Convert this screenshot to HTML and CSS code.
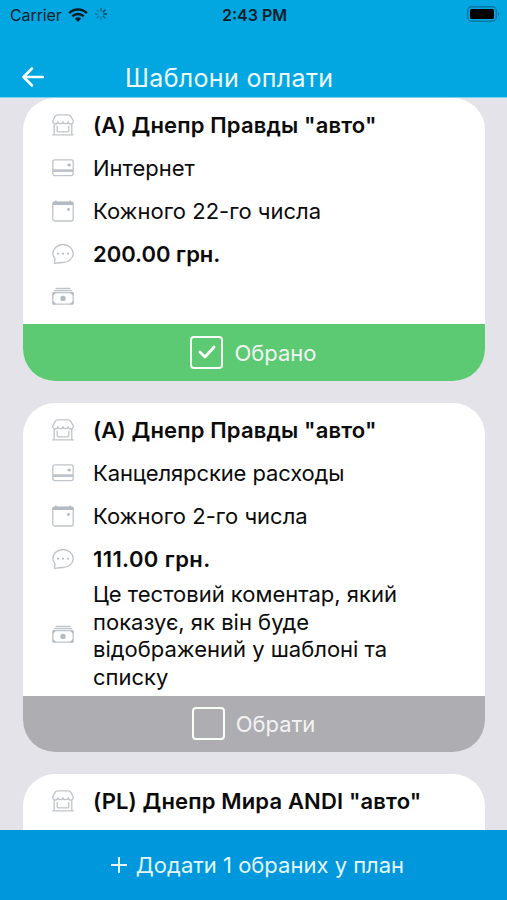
FILE: index.html
```
<!DOCTYPE html>
<html lang="uk">
<head>
<meta charset="utf-8">
<title>Шаблони оплати</title>
<link rel="stylesheet" href="styles.css">
</head>
<body>
<svg class="sprite" aria-hidden="true">
  <symbol id="store" viewBox="0 0 22 22"><path d="M5.500.8h11q1.500 0 2.200 1.300l2.500 4.600c.3 2-.8 3.300-2.400 3.300s-2.500-.8-2.600-2.300c-.1 1.300-1 1.900-2.600 1.900S11 9 11 7.700C11 9 10 9.600 8.400 9.600S5.900 9 5.800 7.700C5.700 9.200 4.800 10 3.200 10S.5 8.700.8 6.700l2.500-4.600Q4 .8 5.500.8zM2.200 10v10.500M19.800 10v10.500M.3 20.800h21.400M5.200 11.700v5.100q0 1 1 1h9.600q1 0 1-1v-5.100"/></symbol>
  <symbol id="card" viewBox="0 0 22 22"><rect x=".8" y="2.800" width="20.400" height="15.800" rx="2"/><path d="M1 13h20M1 14.300h20"/><circle class="dot" cx="17.300" cy="8" r="1.500"/><path class="dot" d="M15.300 7.200h2v1.600h-2z"/></symbol>
  <symbol id="calendar" viewBox="0 0 22 22"><rect x=".8" y="2.200" width="20.400" height="18.800" rx="2"/><path class="dot" d="M.5 5V2.800l1-1h1.500V.5h1.500v1.300h13V.5H19v1.300h1.500l1 1V5z"/><circle class="dot" cx="16.500" cy="9.500" r="1.400"/></symbol>
  <symbol id="chat" viewBox="0 0 22 22"><path d="M2.400 20.300l.7-4.600C1.600 14.200.8 12.500.8 10.500.8 5.700 5.300 1.500 11 1.500s10.200 4.200 10.200 9-4.500 9-10.200 9c-2 0-5 .3-8.600.8z"/><path class="dot" d="M5 9.700h1.900v1.800H5zM10.100 9.700H12v1.800h-1.900zM15.200 9.700h1.900v1.800h-1.900z"/></symbol>
  <symbol id="cash" viewBox="0 0 22 22"><path d="M3.500 2.500h15M1.800 4.600h18.400"/><rect x=".8" y="6.600" width="20.400" height="11.600" rx=".8"/><path class="dot" d="M.8 6.600h3.500L.8 10.100zM21.200 6.600v3.500l-3.500-3.500zM.8 18.200v-3.500l3.500 3.500zM21.200 18.200v-3.500l-3.500 3.500z"/><circle class="dot" cx="11" cy="12.400" r="2.700"/></symbol>
</svg>
<div class="screen">
  <header class="header">
    <div class="status">
      <div class="network">
        <span class="carrier">Carrier</span>
        <svg class="wifi" viewBox="0 0 20 14"><path class="wave" d="M1.200 5.100a12.500 12.500 0 0 1 17.600 0M4.300 8.300a8.200 8.200 0 0 1 11.400 0"/><path d="M6.800 10.600a4.800 4.800 0 0 1 6.400 0L10 13.900z"/></svg>
        <svg class="spinner" viewBox="0 0 14 14"><path d="M9.500 7H13M8.800 5.200l2.600-2.500"/><path opacity=".7" d="M7 4.200V1M8.800 8.800l2.500 2.500"/><path opacity=".4" d="M5.200 5.200L2.900 2.900M7 9.800V13M4.200 7H1M5.200 8.800l-2.300 2.300"/></svg>
      </div>
      <span class="time">2:43 PM</span>
      <svg class="battery" viewBox="0 0 33 16"><rect class="shell" x=".7" y=".7" width="28.600" height="14.600" rx="4"/><rect x="3" y="3" width="24" height="10" rx="1.500"/><path class="cap" d="M31 5.500q2 2.500 0 5z"/></svg>
    </div>
    <div class="titlebar">
      <svg class="back" viewBox="0 0 22 20"><path d="M10 1.500L1.500 10l8.500 8.500M2 10h19"/></svg>
      <h1 class="title">Шаблони оплати</h1>
    </div>
  </header>
  <main class="list">
    <article class="item">
      <div class="details">
        <div class="row"><svg class="icon"><use href="#store"/></svg><strong class="shop">(А) Днепр Правды "авто"</strong></div>
        <div class="row"><svg class="icon"><use href="#card"/></svg><span>Интернет</span></div>
        <div class="row"><svg class="icon"><use href="#calendar"/></svg><span>Кожного 22-го числа</span></div>
        <div class="row"><svg class="icon"><use href="#chat"/></svg><strong>200.00 грн.</strong></div>
        <div class="row"><svg class="icon"><use href="#cash"/></svg></div>
      </div>
      <div class="choice chosen"><span class="box"><svg class="tick" viewBox="0 0 18 14"><path d="M2 7l5 5 9-10"/></svg></span><span class="label">Обрано</span></div>
    </article>
    <article class="item">
      <div class="details">
        <div class="row"><svg class="icon"><use href="#store"/></svg><strong class="shop">(А) Днепр Правды "авто"</strong></div>
        <div class="row"><svg class="icon"><use href="#card"/></svg><span class="category">Канцелярские расходы</span></div>
        <div class="row"><svg class="icon"><use href="#calendar"/></svg><span>Кожного 2-го числа</span></div>
        <div class="row"><svg class="icon"><use href="#chat"/></svg><strong class="ones">111.00 грн.</strong></div>
        <div class="row comment"><svg class="icon"><use href="#cash"/></svg><span>Це тестовий коментар, який<br>показує, як він буде<br>відображений у шаблоні та<br>списку</span></div>
      </div>
      <div class="choice"><span class="box"></span><span class="label">Обрати</span></div>
    </article>
    <article class="item">
      <div class="details">
        <div class="row"><svg class="icon"><use href="#store"/></svg><strong class="shop">(PL) Днепр Мира ANDI "авто"</strong></div>
        <div class="row"></div>
      </div>
    </article>
  </main>
  <footer class="add"><svg class="plus" viewBox="0 0 16 16"><path d="M8 0v16M0 8h16"/></svg><span>Додати 1 обраних у план</span></footer>
</div>
</body>
</html>
```
FILE: styles.css
```
* { box-sizing: border-box; }
body { margin: 0; font-family: Inter, "Liberation Sans", sans-serif; color: #0b0b0b; }
svg { flex: none; display: block; }
.sprite { display: none; }
.screen { width: 507px; height: 900px; display: flex; flex-direction: column; overflow: hidden; background: #e4e3e9; }

.header { flex: none; height: 98px; background: #02a7e2; border-bottom: 1px solid #7fd3f1; }
.status { display: grid; grid-template-columns: 1fr auto 1fr; align-items: center; height: 30px; padding: 0 8px 0 10px; color: #07202c; }
.network { display: flex; align-items: center; }
.carrier { font-size: 16px; letter-spacing: -0.1px; }
.wifi { width: 20px; height: 14px; margin-left: 6px; fill: #061c26; }
.wave { fill: none; stroke: #061c26; stroke-width: 2.500; }
.spinner { width: 14px; height: 14px; margin-left: 6px; margin-top: -2px; fill: none; stroke: #0b3c50; stroke-width: 1.300; }
.time { font-size: 16px; font-weight: 600; }
.battery { width: 33px; height: 16px; margin: -2px -1px 0 0; justify-self: end; fill: #000; }
.shell { fill: none; stroke: #04779f; stroke-width: 1.400; }
.cap { fill: #04779f; }
.titlebar { display: flex; align-items: center; height: 68px; padding: 27px 0 0 22px; }
.back { width: 22px; height: 20px; margin-top: -2px; fill: none; stroke: #fff; stroke-width: 2.500; stroke-linecap: round; stroke-linejoin: round; }
.title { margin: 0 0 0 81px; font-size: 25px; line-height: 30px; font-weight: 400; letter-spacing: 0.340px; color: #eefbff; white-space: nowrap; }

.list { flex: 1; min-height: 0; overflow: hidden; display: flex; flex-direction: column; gap: 22px; padding: 0 22px 0 23px; }
.item { flex: none; border-radius: 32px; overflow: hidden; background: #fff; }
.details { padding: 5.500px 29px; }
.row { display: flex; align-items: center; gap: 19px; height: 43px; font-size: 22px; line-height: 27.500px; white-space: nowrap; }
.row span, .row strong { padding-top: 2px; }
.row strong { font-weight: 600; }
.row .shop { letter-spacing: 0.150px; }
.row .category { letter-spacing: -0.120px; }
.row .ones { letter-spacing: 0.400px; }
.comment { height: 110px; }
.icon { width: 22px; height: 22px; fill: none; stroke: #bfc4ca; stroke-width: 1.300; stroke-linejoin: round; }
.dot { fill: #b3bac2; stroke: none; }
.choice { display: flex; align-items: center; justify-content: center; gap: 11px; height: 56.500px; padding-right: 1px; background: #aeadb2; color: #f3f3f5; font-size: 22px; }
.label { padding-top: 1px; }
.chosen { background: #5cca73; }
.box { width: 33px; height: 33px; display: flex; align-items: center; justify-content: center; border: 2px solid #f8fff9; border-radius: 4px; }
.tick { width: 18px; height: 14px; fill: none; stroke: #fff; stroke-width: 2.800; stroke-linecap: round; stroke-linejoin: round; }

.add { flex: none; height: 70px; display: flex; align-items: center; justify-content: center; gap: 9px; padding-left: 8px; background: #0097dc; color: #e4f7ff; font-size: 22px; }
.plus { width: 16px; height: 16px; stroke: #e4f7ff; stroke-width: 2; }
```
